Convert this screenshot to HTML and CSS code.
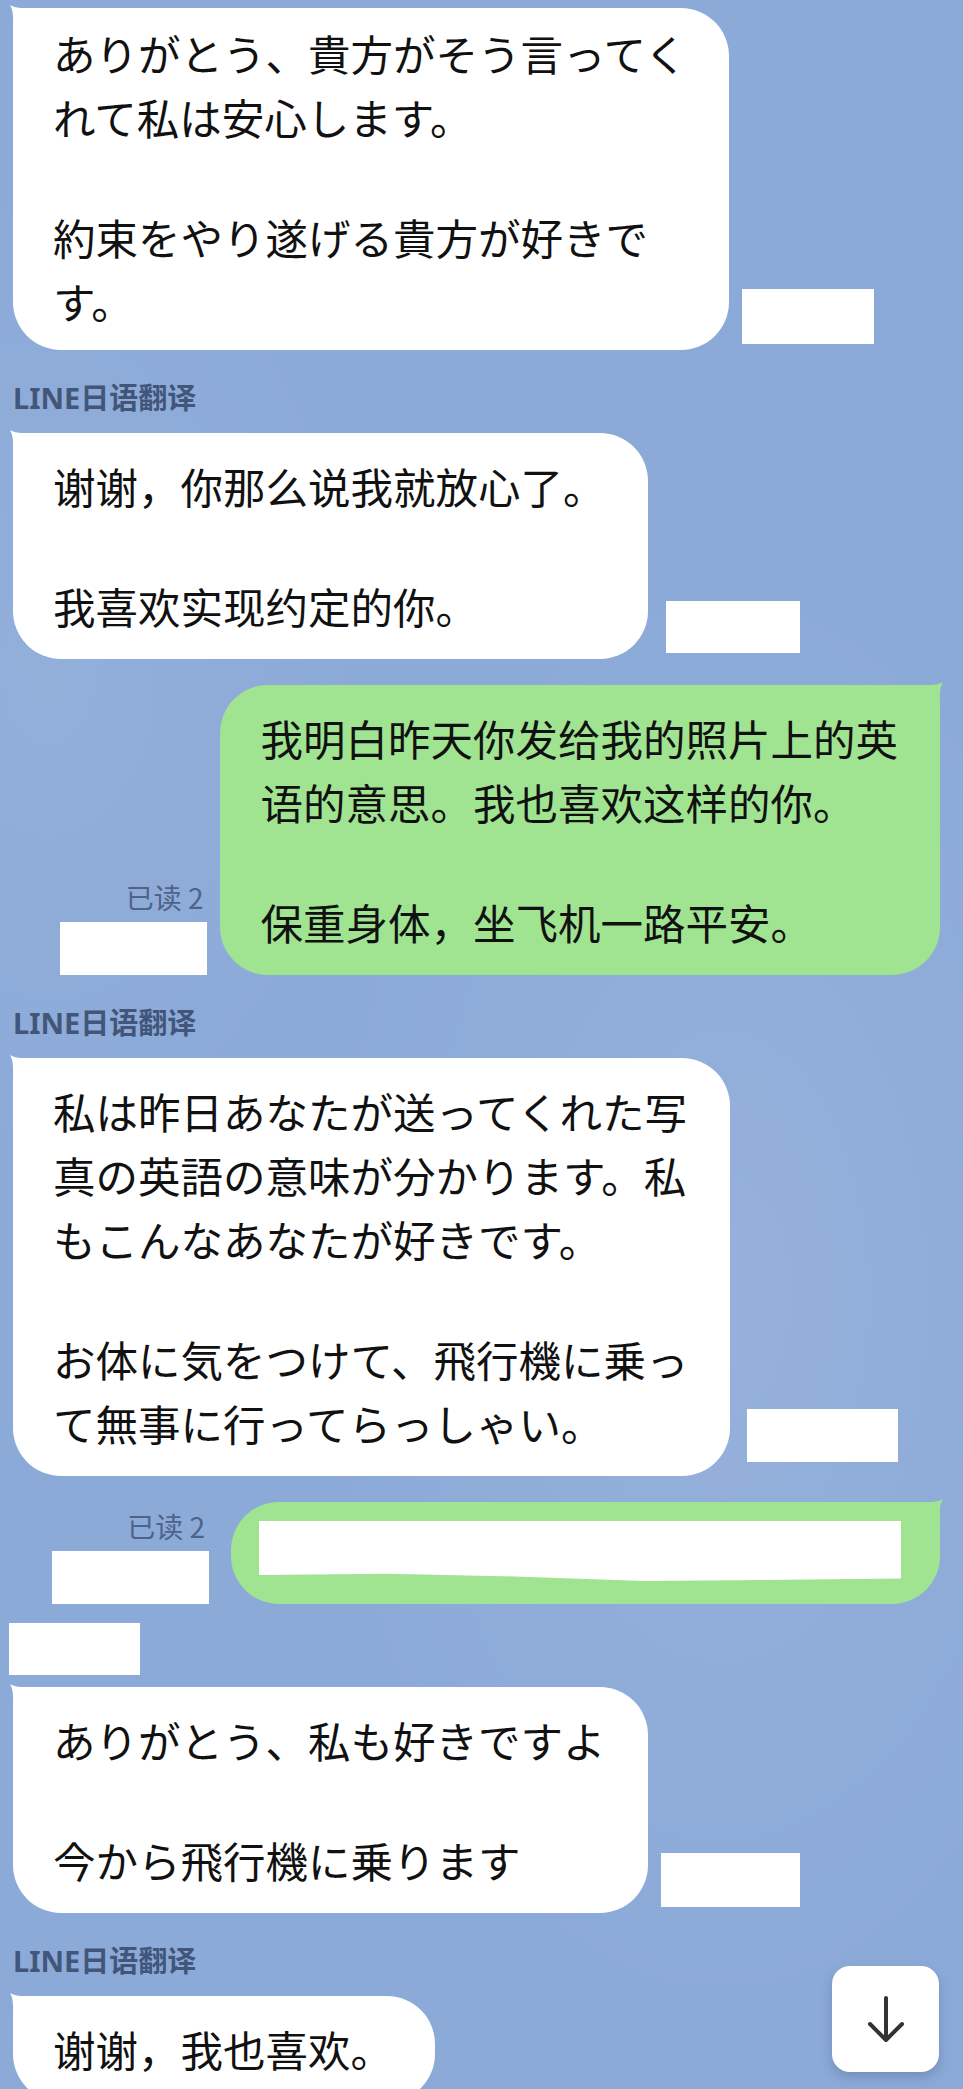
FILE: index.html
```html
<!DOCTYPE html>
<html lang="zh-CN">
<head>
  <meta charset="UTF-8" />
  <meta name="viewport" content="width=device-width, initial-scale=1.0"/>
  <title>LINE 聊天</title>
  <link rel="stylesheet" href="styles.css">
</head>
<body>
  <div class="screen">
    <div class="chat">

      <div class="row in">
        <div class="bubble in first" lang="ja">
          <p>ありがとう、貴方がそう言ってく<br>れて私は安心します。</p>
          <p>約束をやり遂げる貴方が好きで<br>す。</p>
        </div>
        <span class="mask t1"></span>
      </div>

      <div class="name">LINE日语翻译</div>

      <div class="row in">
        <div class="bubble in" lang="zh-CN">
          <p>谢谢，你那么说我就放心了。</p>
          <p>我喜欢实现约定的你。</p>
        </div>
        <span class="mask t2"></span>
      </div>

      <div class="row out">
        <div class="meta">
          <span class="read">已读 2</span>
          <span class="mask t3"></span>
        </div>
        <div class="bubble out" lang="zh-CN">
          <p>我明白昨天你发给我的照片上的英<br>语的意思。我也喜欢这样的你。</p>
          <p>保重身体，坐飞机一路平安。</p>
        </div>
      </div>

      <div class="name">LINE日语翻译</div>

      <div class="row in">
        <div class="bubble in" lang="ja">
          <p>私は昨日あなたが送ってくれた写<br>真の英語の意味が分かります。私<br>もこんなあなたが好きです。</p>
          <p>お体に気をつけて、飛行機に乗っ<br>て無事に行ってらっしゃい。</p>
        </div>
        <span class="mask t4"></span>
      </div>

      <div class="row out">
        <div class="meta">
          <span class="read">已读 2</span>
          <span class="mask t5"></span>
        </div>
        <div class="bubble out hidden-msg">
          <span class="mask inner"></span>
        </div>
      </div>

      <div class="name masked"><span class="mask who"></span></div>

      <div class="row in">
        <div class="bubble in" lang="ja">
          <p>ありがとう、私も好きですよ</p>
          <p>今から飛行機に乗ります</p>
        </div>
        <span class="mask t6"></span>
      </div>

      <div class="name">LINE日语翻译</div>

      <div class="row in">
        <div class="bubble in" lang="zh-CN">
          <p>谢谢，我也喜欢。</p>
        </div>
      </div>

    </div>

    <button class="scroll-down" aria-label="scroll down">
      <svg width="40" height="50" viewBox="0 0 40 50">
        <path d="M20 4 V46 M4 30 L20 46 L36 30" fill="none" stroke="#333" stroke-width="4" stroke-linecap="round" stroke-linejoin="round"/>
      </svg>
    </button>
  </div>
</body>
</html>
```

FILE: styles.css
```css
:root {
  --bg-color: #8caad8;
  --in-color: #ffffff;
  --out-color: #a0e492;
  --label-color: #42567a;
  --read-color: #4f6288;
  --text-color: #111111;
}

* {
  margin: 0;
  padding: 0;
  box-sizing: border-box;
}

body {
  background: var(--bg-color);
  font-family: 'Noto Sans', 'Noto Sans CJK SC', sans-serif;
}

.screen {
  position: relative;
  width: 963px;
  height: 2089px;
  overflow: hidden;
  background: var(--bg-color);
  background-image:
    radial-gradient(ellipse at 75% 62%, rgba(255,255,255,0.08) 0%, transparent 40%),
    radial-gradient(ellipse at 5% 32%, rgba(255,255,255,0.06) 0%, transparent 25%);
}

.chat {
  padding: 8px 23px 0 13px;
}

/* rows */
.row {
  display: flex;
  align-items: flex-end;
  gap: 13px;
}
.row + .row {
  margin-top: 26px;
}
.row.out {
  justify-content: flex-end;
}

/* bubbles */
.bubble {
  position: relative;
  padding: 21px 42px 21px 40px;
  border-radius: 48px;
  color: var(--text-color);
  font-size: 42.5px;
  line-height: 64px;
  white-space: nowrap;
  font-family: 'Noto Sans CJK SC', sans-serif;
}
.bubble[lang="ja"] {
  font-family: 'Noto Sans CJK JP', sans-serif;
}
.bubble p + p {
  margin-top: 56px;
}
.bubble.in {
  background: var(--in-color);
  border-top-left-radius: 20px;
}
.bubble.out {
  background: var(--out-color);
  border-top-right-radius: 20px;
}
.bubble.in::before,
.bubble.out::before {
  content: '';
  position: absolute;
  top: -3px;
  width: 28px;
  height: 28px;
  background: inherit;
}
.bubble.in::before {
  left: -3px;
  clip-path: path('M0 0 C 7 4 13 3 28 3 L28 28 L3 28 C 3 14 4 7 0 0 Z');
}
.bubble.out::before {
  right: -3px;
  clip-path: path('M28 0 C 21 4 15 3 0 3 L0 28 L25 28 C 25 14 24 7 28 0 Z');
}
.bubble.first {
  padding-top: 13px;
  padding-bottom: 17px;
}
.bubble.hidden-msg {
  padding: 19px 39px 23px 28px;
  margin-left: 9px;
}

/* white boxes that cover times and names */
.mask {
  display: block;
  background: #fff;
}
.row.in .mask {
  margin-bottom: 6px;
}
.t1 { width: 132px; height: 55px; }
.t2 { width: 134px; height: 52px; margin-left: 5px; }
.t4 { width: 151px; height: 53px; margin-left: 4px; margin-bottom: 14px !important; }
.t6 { width: 139px; height: 54px; }
.t3 { width: 147px; height: 53px; }
.t5 { width: 157px; height: 53px; }
.mask.inner {
  width: 642px;
  height: 60px;
  clip-path: polygon(0 0, 100% 0, 100% 96%, 60% 100%, 38% 92%, 20% 88%, 0 90%);
}
.mask.who {
  width: 131px;
  height: 52px;
  margin-left: -4px;
}

.meta {
  display: flex;
  flex-direction: column;
  align-items: flex-end;
}
.read {
  font-family: 'Noto Sans CJK SC', sans-serif;
  font-size: 28px;
  line-height: 32px;
  color: var(--read-color);
  padding-right: 4px;
  margin-bottom: 9px;
}

/* sender label */
.name {
  margin: 31px 0 18px;
  height: 34px;
  line-height: 34px;
  font-size: 29px;
  font-weight: 700;
  color: var(--label-color);
}
.name.masked {
  margin: 19px 0 12px;
  height: 52px;
}

.scroll-down {
  position: absolute;
  right: 24px;
  bottom: 17px;
  width: 107px;
  height: 106px;
  border: none;
  border-radius: 18px;
  background: #fff;
  box-shadow: 0 5px 12px rgba(40, 60, 100, 0.25);
  display: flex;
  align-items: center;
  justify-content: center;
}
```
